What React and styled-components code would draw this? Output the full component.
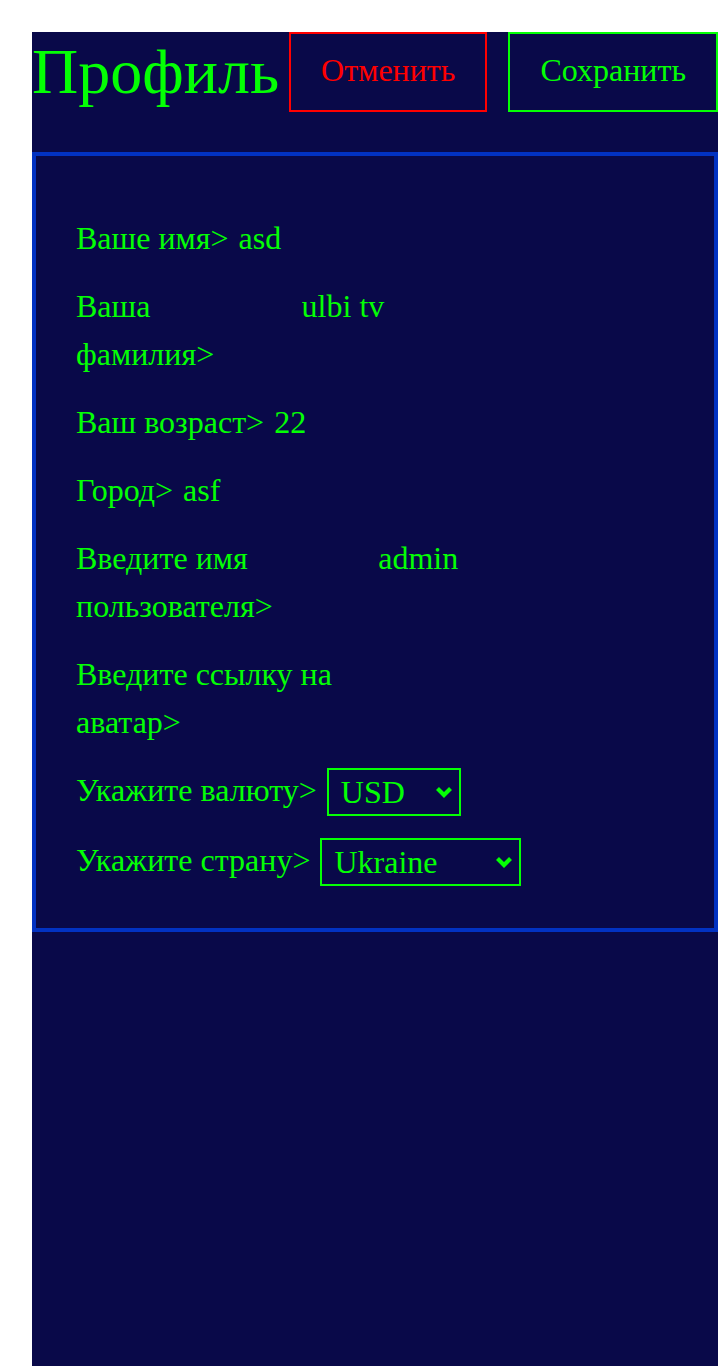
import React from "react";
import styled, {createGlobalStyle} from "styled-components";

const GlobalStyle = createGlobalStyle`
  body {
    margin: 0;
    background: #ffffff;
    font-family: "Liberation Serif", "Times New Roman", serif;
  }
`

const Page = styled.div`
  display: flex;
  padding: 32px 0 0 32px;
`

const Content = styled.div`
  flex: 1;
  min-height: 100vh;
  background-color: #090949;
  color: #04ff04;
`

const Header = styled.div`
  display: flex;
  justify-content: space-between;
  align-items: center;
`

const Title = styled.h1`
  margin: 0;
  font-size: 64px;
  font-weight: normal;
  color: #04ff04;
`

const Buttons = styled.div`
  display: flex;
  gap: 21px;
`

const Button = styled.button`
  height: 80px;
  padding: 0 30px 3px;
  background: transparent;
  border: 2px solid ${props => props.color};
  color: ${props => props.color};
  font-family: inherit;
  font-size: 32px;
  cursor: pointer;
`

const Card = styled.div`
  display: flex;
  flex-direction: column;
  gap: 20px;
  margin-top: 40px;
  padding: 58px 40px 42px;
  border: 4px solid #0232c2;
`

const Row = styled.div`
  display: flex;
  align-items: flex-start;
  gap: 10px;
  font-size: 32px;
  line-height: 48px;
`

const Label = styled.span`
  color: #04ff04;
`

const Input = styled.input`
  width: 381px;
  min-width: 0;
  height: 48px;
  padding: 0;
  border: none;
  outline: none;
  background: transparent;
  color: #04ff04;
  font-family: inherit;
  font-size: 32px;
`

const SelectWrap = styled.div`
  position: relative;
  flex-shrink: 0;
  margin-top: 2px;
  width: ${props => props.width}px;
  height: 48px;
`

const Select = styled.select`
  appearance: none;
  width: 100%;
  height: 100%;
  padding: 0 0 0 12px;
  border: 2px solid #04ff04;
  border-radius: 0;
  background: transparent;
  color: #04ff04;
  font-family: inherit;
  font-size: 32px;
  outline: none;
  cursor: pointer;
`

const Arrow = styled.svg`
  position: absolute;
  right: 8px;
  top: 18px;
  pointer-events: none;
`

const fields = [
    { label: "Ваше имя>", value: "asd" },
    { label: "Ваша фамилия>", value: "ulbi tv" },
    { label: "Ваш возраст>", value: "22" },
    { label: "Город>", value: "asf" },
    { label: "Введите имя пользователя>", value: "admin" },
    { label: "Введите ссылку на аватар>", value: "" },
]

const currencies = ["RUB", "EUR", "USD"]
const countries = ["Armenia", "Russia", "Belarus", "Kazakhstan", "Ukraine"]

const ListSelect = ({ width, value, options }) => (
    <SelectWrap width={width}>
        <Select defaultValue={value}>
            {options.map(o => <option key={o} value={o}>{o}</option>)}
        </Select>
        <Arrow width="18" height="12" viewBox="0 0 18 12">
            <path d="M2.5 2.5 L9 9 L15.5 2.5" fill="none" stroke="#04ff04" strokeWidth="4.2"/>
        </Arrow>
    </SelectWrap>
)

export default () => {
    return (
        <Page>
            <GlobalStyle/>
            <Content>
                <Header>
                    <Title>Профиль</Title>
                    <Buttons>
                        <Button color="#ff0000">Отменить</Button>
                        <Button color="#04ff04">Сохранить</Button>
                    </Buttons>
                </Header>
                <Card>
                    {fields.map(field => (
                        <Row key={field.label}>
                            <Label>{field.label}</Label>
                            <Input defaultValue={field.value}/>
                        </Row>
                    ))}
                    <Row>
                        <Label>Укажите валюту&gt;</Label>
                        <ListSelect width={134} value="USD" options={currencies}/>
                    </Row>
                    <Row>
                        <Label>Укажите страну&gt;</Label>
                        <ListSelect width={201} value="Ukraine" options={countries}/>
                    </Row>
                </Card>
            </Content>
        </Page>
    )
}
